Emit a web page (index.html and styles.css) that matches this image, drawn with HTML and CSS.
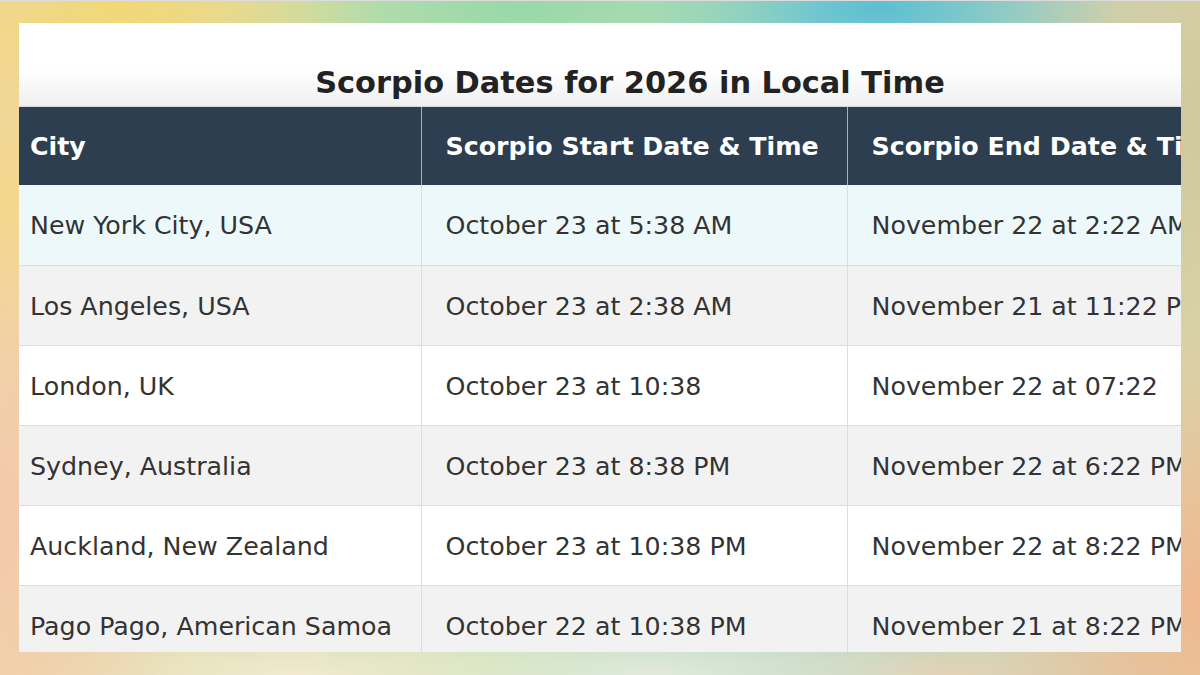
FILE: index.html
```html
<!DOCTYPE html>
<html lang="en">
<head>
<meta charset="utf-8">
<title>Scorpio Dates for 2026 in Local Time</title>
<link rel="stylesheet" href="styles.css">
</head>
<body>
<div class="card">
  <div class="inner">
    <h2 class="title">Scorpio Dates for 2026 in Local Time</h2>
    <table class="dates">
      <colgroup>
        <col class="c1"><col class="c2"><col class="c3">
      </colgroup>
      <thead>
        <tr><th>City</th><th>Scorpio Start Date &amp; Time</th><th>Scorpio End Date &amp; Time</th></tr>
      </thead>
      <tbody>
        <tr class="hl"><td>New York City, USA</td><td>October 23 at 5:38 AM</td><td>November 22 at 2:22 AM</td></tr>
        <tr class="alt"><td>Los Angeles, USA</td><td>October 23 at 2:38 AM</td><td>November 21 at 11:22 PM</td></tr>
        <tr><td>London, UK</td><td>October 23 at 10:38</td><td>November 22 at 07:22</td></tr>
        <tr class="alt"><td>Sydney, Australia</td><td>October 23 at 8:38 PM</td><td>November 22 at 6:22 PM</td></tr>
        <tr><td>Auckland, New Zealand</td><td>October 23 at 10:38 PM</td><td>November 22 at 8:22 PM</td></tr>
        <tr class="alt"><td>Pago Pago, American Samoa</td><td>October 22 at 10:38 PM</td><td>November 21 at 8:22 PM</td></tr>
      </tbody>
    </table>
  </div>
</div>
</body>
</html>
```
FILE: styles.css
```css
html, body {
  margin: 0;
  padding: 0;
}
body {
  width: 1200px;
  height: 675px;
  overflow: hidden;
  font-family: "DejaVu Sans", Verdana, sans-serif;
  border-top: 1px solid #dcdcdc;
  box-sizing: border-box;
  background:
    radial-gradient(ellipse 260px 120px at 120px 10px, #f1d877 0%, rgba(241,216,119,0) 100%),
    radial-gradient(ellipse 300px 90px at 520px 8px, #98d8a8 0%, rgba(152,216,168,0) 100%),
    radial-gradient(ellipse 240px 90px at 880px 8px, #5cbfd2 0%, rgba(92,191,210,0) 100%),
    radial-gradient(ellipse 200px 260px at 1200px 120px, #cfc9a0 0%, rgba(207,201,160,0) 100%),
    radial-gradient(ellipse 220px 260px at 1200px 600px, #f0b890 0%, rgba(240,184,144,0) 100%),
    radial-gradient(ellipse 200px 300px at 0px 520px, #f3c9ac 0%, rgba(243,201,172,0) 100%),
    radial-gradient(ellipse 160px 200px at 0px 200px, #f2d88c 0%, rgba(242,216,140,0) 100%),
    radial-gradient(ellipse 300px 60px at 300px 675px, #f1ead0 0%, rgba(241,234,208,0) 100%),
    radial-gradient(ellipse 300px 60px at 650px 675px, #e2eadb 0%, rgba(226,234,219,0) 100%),
    radial-gradient(ellipse 260px 60px at 950px 675px, #e4d2b4 0%, rgba(228,210,180,0) 100%),
    linear-gradient(90deg, #f1d6a8 0%, #c4e2b0 40%, #a8d8c8 70%, #dcd2a8 100%);
  padding: 22px 19px 0 19px;
}
.card {
  width: 1162px;
  height: 629px;
  background: #ffffff;
  overflow: hidden;
}
.inner {
  width: 1222px;
}
.title {
  margin: 0;
  height: 84px;
  box-sizing: border-box;
  padding-top: 42px;
  font-size: 30.4px;
  line-height: 36px;
  font-weight: bold;
  color: #222222;
  text-align: center;
  background: linear-gradient(180deg, #ffffff 0%, #ffffff 55%, #f0f0f0 100%);
  border-bottom: 1px solid #d8d8d8;
}
.dates {
  width: 1222px;
  border-collapse: collapse;
  table-layout: fixed;
  font-size: 25.3px;
}
.c1 { width: 402px; }
.c2 { width: 426px; }
.c3 { width: 394px; }
.dates th {
  background: #2c3e50;
  color: #ffffff;
  font-weight: bold;
  text-align: left;
  height: 78px;
  padding: 0 0 0 24px;
  border-left: 1px solid #a9b0b7;
  white-space: nowrap;
  overflow: hidden;
  box-sizing: border-box;
}
.dates td {
  color: #333333;
  height: 80px;
  padding: 2px 0 0 24px;
  border-left: 1px solid #dddddd;
  border-top: 1px solid #dddddd;
  white-space: nowrap;
  overflow: hidden;
  box-sizing: border-box;
  background: #ffffff;
}
.dates th:first-child,
.dates td:first-child {
  border-left: none;
  padding-left: 11px;
}
.dates thead th { border-top: none; }
.dates tbody tr:first-child td { border-top: none; }
.dates tr.alt td { background: #f2f2f2; }
.dates tr.hl td { background: #edf8fb; }
```
